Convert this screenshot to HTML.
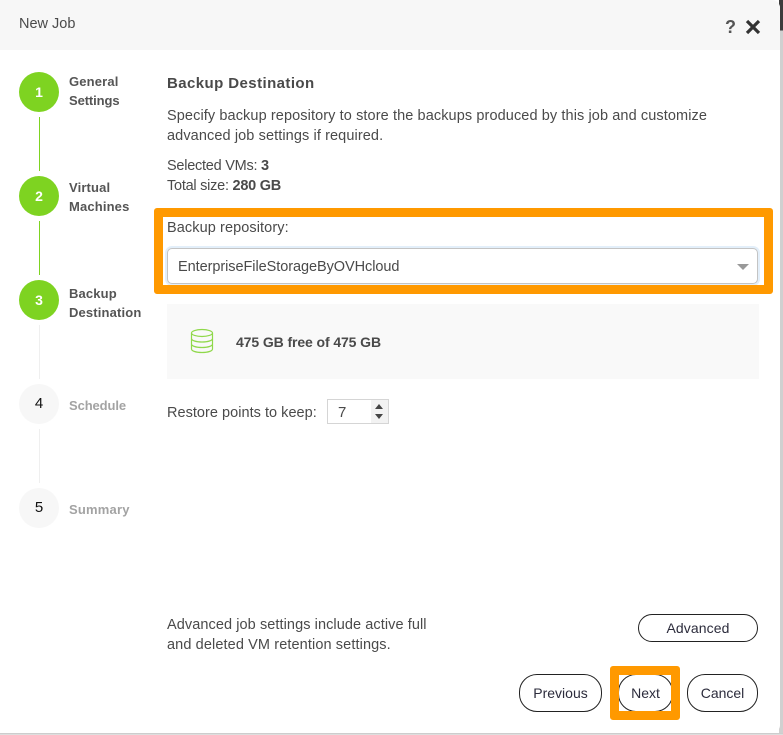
<!DOCTYPE html>
<html><head><meta charset="utf-8">
<style>
html,body{margin:0;padding:0;width:783px;height:735px;overflow:hidden;background:#fff}
body{position:relative;font-family:"Liberation Sans",sans-serif;font-size:14.5px;color:#4a4a4a}
.t{position:absolute;white-space:nowrap;line-height:20px}
.win{position:absolute;left:0;top:0;width:780px;height:733px;background:#fff;border-radius:0 8px 8px 0}
.bg{position:absolute;right:0;top:0;width:4px;height:735px;background:linear-gradient(to bottom,#3c3c3c 0,#3c3c3c 30px,#d0d0d0 31px,#d0d0d0 100%)}
.bot{position:absolute;left:0;top:733px;width:783px;height:2px;background:linear-gradient(to bottom,#c4c4c4,#e6e6e6)}
.head{position:absolute;left:0;top:0;width:780px;height:50px;background:#f7f7f7;border-radius:0 8px 0 0}
.c{position:absolute;left:19px;width:40px;height:40px;border-radius:50%;background:#7ed321;color:#fff;font-weight:bold;text-align:center;line-height:40px;font-size:14px}
.c.off{background:#f7f7f7;color:#111;font-weight:normal;line-height:39px;font-size:15px}
.l{position:absolute;left:39px;width:1px}
.s{font-size:13px;font-weight:bold;letter-spacing:.15px;line-height:19px;color:#555}
.s.off{color:#a3a3a3}
.b{position:absolute;box-sizing:border-box;border:1px solid #222;border-radius:18px;background:#fff;text-align:center;color:#2c2c3c;font-size:14px}
.o{position:absolute;box-sizing:border-box;border:9px solid #ff9900;border-radius:3px}
</style></head><body>
<div class="bg"></div>
<div class="bot"></div>
<div class="win"></div>
<div class="head"></div>
<div class="t" style="left:19px;top:14px;font-size:14.5px;letter-spacing:0">New Job</div>
<div class="t" style="left:725px;top:17px;font-size:18px;font-weight:bold;color:#555">?</div>
<svg style="position:absolute;left:745px;top:19px" width="16" height="16" viewBox="0 0 16 16"><path d="M2 2L14 14M14 2L2 14" stroke="#333" stroke-width="3.2" fill="none"/></svg>

<div class="c" style="top:72px">1</div>
<div class="l" style="top:117px;height:54px;background:#7ed321;"></div>
<div class="c" style="top:176px">2</div>
<div class="l" style="top:221px;height:54px;background:#7ed321;"></div>
<div class="c" style="top:280px">3</div>
<div class="l" style="top:325px;height:54px;background:#efefef"></div>
<div class="c off" style="top:384px">4</div>
<div class="l" style="top:429px;height:54px;background:#efefef"></div>
<div class="c off" style="top:488px">5</div>

<div class="t s" style="left:69px;top:72px">General<br><span style="letter-spacing:-.1px">Settings</span></div>
<div class="t s" style="left:69px;top:178px">Virtual<br>Machines</div>
<div class="t s" style="left:69px;top:284px">Backup<br><span style="letter-spacing:.15px">Destination</span></div>
<div class="t s off" style="left:69px;top:396px;letter-spacing:-.1px">Schedule</div>
<div class="t s off" style="left:69px;top:500px;letter-spacing:.2px">Summary</div>

<div class="t" style="left:167px;top:74px;font-size:15px;font-weight:bold;letter-spacing:.42px">Backup Destination</div>
<div class="t" style="left:167px;top:106px;letter-spacing:.1px">Specify backup repository to store the backups produced by this job and customize</div>
<div class="t" style="left:167px;top:126px;letter-spacing:.1px">advanced job settings if required.</div>
<div class="t" style="left:167px;top:156px;letter-spacing:-.25px">Selected VMs: <b>3</b></div>
<div class="t" style="left:167px;top:176px;letter-spacing:-.25px">Total size: <b>280 GB</b></div>

<div class="t" style="left:167px;top:218px;letter-spacing:.09px">Backup repository:</div>
<div style="position:absolute;left:167px;top:248px;width:591px;height:36px;box-sizing:border-box;border:1px solid #c4c4c4;border-radius:5px;box-shadow:0 0 0 2px #e3effa;background:#fff"></div>
<div class="t" style="left:178px;top:257px;letter-spacing:-.06px">EnterpriseFileStorageByOVHcloud</div>
<div style="position:absolute;left:737px;top:264px;width:0;height:0;border-left:6px solid transparent;border-right:6px solid transparent;border-top:6px solid #999"></div>
<div class="o" style="left:154px;top:208px;width:619px;height:86px"></div>

<div style="position:absolute;left:167px;top:304px;width:592px;height:75px;background:#f9f9f9"></div>
<svg style="position:absolute;left:190px;top:328px" width="24" height="26" viewBox="0 0 24 26" fill="none" stroke="#8fd84a" stroke-width="1.2"><ellipse cx="12" cy="5" rx="10.5" ry="3.5"/><path d="M1.5 5V21C1.5 23 6 24.5 12 24.5S22.500 23 22.500 21V5M1.500 10.500C1.500 12.500 6 14 12 14S22.500 12.500 22.500 10.500M1.500 16C1.500 18 6 19.500 12 19.500S22.500 18 22.500 16"/></svg>
<div class="t" style="left:236px;top:332px;font-size:14px;font-weight:bold;letter-spacing:-.1px">475 GB free of 475 GB</div>

<div class="t" style="left:167px;top:403px;letter-spacing:.03px">Restore points to keep:</div>
<div style="position:absolute;left:327px;top:399px;width:62px;height:25px;box-sizing:border-box;border:1px solid #d5d5d5;background:#fff"></div>
<div style="position:absolute;left:371px;top:400px;width:17px;height:23px;background:#f2f2f2"></div>
<div class="t" style="left:338px;top:403px;font-size:15px">7</div>
<div style="position:absolute;left:375px;top:404px;width:0;height:0;border-left:4px solid transparent;border-right:4px solid transparent;border-bottom:5px solid #444"></div>
<div style="position:absolute;left:375px;top:414px;width:0;height:0;border-left:4px solid transparent;border-right:4px solid transparent;border-top:5px solid #444"></div>

<div class="t" style="left:167px;top:615px;letter-spacing:.08px">Advanced job settings include active full</div>
<div class="t" style="left:167px;top:635px;letter-spacing:.11px">and deleted VM retention settings.</div>

<div class="b" style="left:638px;top:614px;width:120px;height:28px;line-height:26px;letter-spacing:.1px">Advanced</div>
<div class="b" style="left:519px;top:674px;width:83px;height:38px;line-height:36px">Previous</div>
<div class="b" style="left:618px;top:674px;width:55px;height:38px;line-height:36px">Next</div>
<div class="b" style="left:687px;top:674px;width:71px;height:38px;line-height:36px">Cancel</div>
<div class="o" style="left:610px;top:666px;width:70px;height:54px"></div>
</body></html>
